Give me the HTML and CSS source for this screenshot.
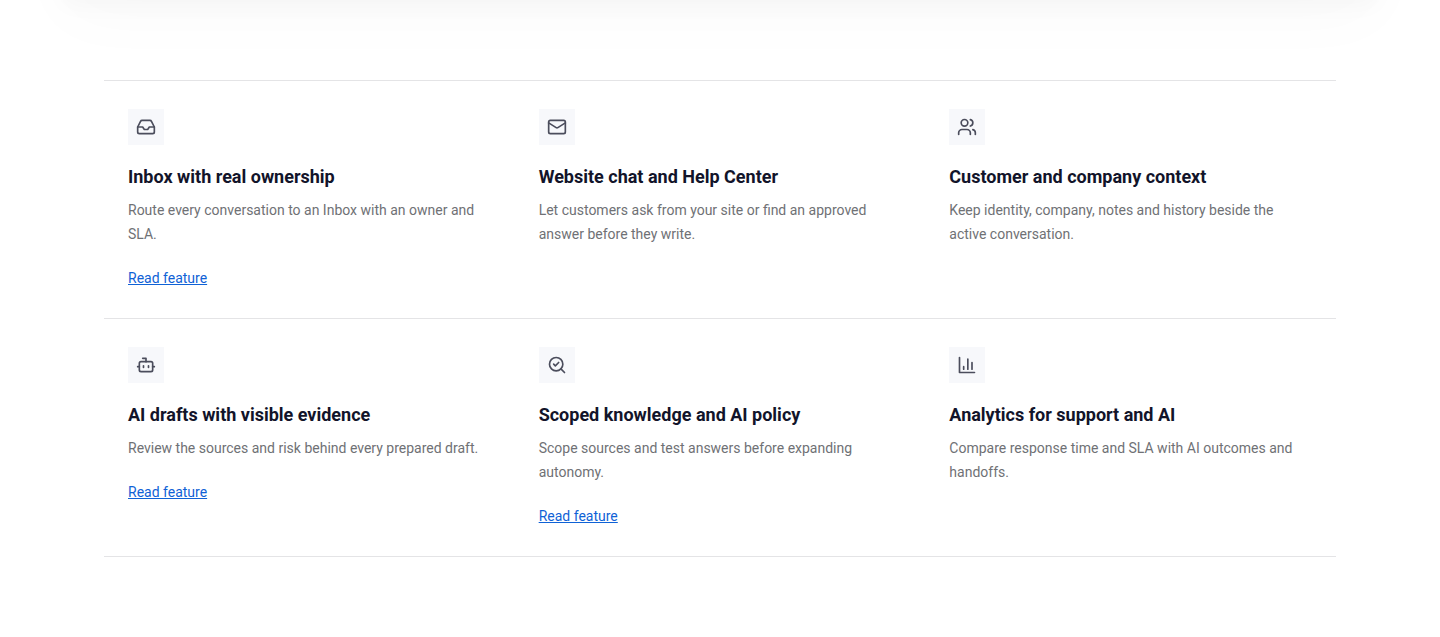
FILE: index.html
```html
<!DOCTYPE html>
<html lang="en">
<head>
  <meta charset="UTF-8">
  <title>Features</title>
  <meta name="viewport" content="width=device-width, initial-scale=1.0">
  <link rel="stylesheet" href="styles.css">
</head>

<body>

  <div class="preview"></div>

  <main class="features">
    <article class="feature">
      <div class="icon">
        <svg viewBox="0 0 24 24" aria-hidden="true">
          <path d="M22 12h-6l-2 3h-4l-2-3H2"/>
          <path d="M5.45 5.11 2 12v6a2 2 0 0 0 2 2h16a2 2 0 0 0 2-2v-6l-3.45-6.89A2 2 0 0 0 16.76 4H7.24a2 2 0 0 0-1.79 1.11z"/>
        </svg>
      </div>
      <h3>Inbox with real ownership</h3>
      <p>Route every conversation to an Inbox with an owner and SLA.</p>
      <a href="#">Read feature</a>
    </article>

    <article class="feature">
      <div class="icon">
        <svg viewBox="0 0 24 24" aria-hidden="true">
          <rect x="2" y="4" width="20" height="16" rx="2"/>
          <path d="m22 7-8.97 5.7a1.94 1.94 0 0 1-2.06 0L2 7"/>
        </svg>
      </div>
      <h3>Website chat and Help Center</h3>
      <p>Let customers ask from your site or find an approved answer before they write.</p>
    </article>

    <article class="feature">
      <div class="icon">
        <svg viewBox="0 0 24 24" aria-hidden="true">
          <circle cx="9" cy="7" r="4"/>
          <path d="M16 21v-2a4 4 0 0 0-4-4H6a4 4 0 0 0-4 4v2"/>
          <path d="M22 21v-2a4 4 0 0 0-3-3.87"/>
          <path d="M16 3.13a4 4 0 0 1 0 7.75"/>
        </svg>
      </div>
      <h3>Customer and company context</h3>
      <p>Keep identity, company, notes and history beside the active conversation.</p>
    </article>

    <article class="feature">
      <div class="icon">
        <svg viewBox="0 0 24 24" aria-hidden="true">
          <path d="M12 8V4H8"/>
          <rect x="4" y="8" width="16" height="12" rx="2"/>
          <path d="M2 14h2M20 14h2M15 13v2M9 13v2"/>
        </svg>
      </div>
      <h3>AI drafts with visible evidence</h3>
      <p>Review the sources and risk behind every prepared draft.</p>
      <a href="#">Read feature</a>
    </article>

    <article class="feature">
      <div class="icon">
        <svg viewBox="0 0 24 24" aria-hidden="true">
          <path d="m8 11 2 2 4-4"/>
          <circle cx="11" cy="11" r="8"/>
          <path d="m21 21-4.3-4.3"/>
        </svg>
      </div>
      <h3>Scoped knowledge and AI policy</h3>
      <p>Scope sources and test answers before expanding autonomy.</p>
      <a href="#">Read feature</a>
    </article>

    <article class="feature">
      <div class="icon">
        <svg viewBox="0 0 24 24" aria-hidden="true">
          <path d="M3 3v18h18"/>
          <path d="M18 17V9M13 17V5M8 17v-3"/>
        </svg>
      </div>
      <h3>Analytics for support and AI</h3>
      <p>Compare response time and SLA with AI outcomes and handoffs.</p>
    </article>
  </main>

</body>
</html>
```

FILE: styles.css
```css
:root {
  --text-color: #12142a;
  --muted-color: #6f7175;
  --link-color: #0f62d6;
  --line-color: #e4e4e6;
  --icon-bg: #f7f8fb;
}

* {
  box-sizing: border-box;
}

body {
  margin: 0;
  font-family: Roboto, Arial, sans-serif;
  font-size: 14px;
  line-height: 24px;
  background-color: #fff;
  color: var(--text-color);
  overflow-x: hidden;
}

/* Only the shadow of the panel reaches into the page */
.preview {
  height: 200px;
  margin: -200px 64px 80px;
  box-shadow: 0 4px 24px rgba(0, 0, 0, 0.03), 0 16px 64px rgba(0, 0, 0, 0.025);
}

.features {
  display: grid;
  grid-template-columns: repeat(3, 1fr);
  max-width: 1232px;
  margin: 0 auto 80px;
  border-top: 1px solid var(--line-color);
}

.feature {
  padding: 28px 24px;
  border-bottom: 1px solid var(--line-color);
}

.icon {
  display: flex;
  align-items: center;
  justify-content: center;
  width: 36px;
  height: 36px;
  margin-bottom: 20px;
  background: var(--icon-bg);
}

.icon svg {
  width: 20px;
  height: 20px;
  fill: none;
  stroke: #4b4d5c;
  stroke-width: 2;
  stroke-linecap: round;
  stroke-linejoin: round;
}

h3 {
  margin: 0 0 9px;
  font-size: 18px;
  line-height: 24px;
  font-weight: 700;
}

p {
  margin: 0;
  color: var(--muted-color);
}

.feature a {
  display: inline-block;
  margin-top: 20px;
  color: var(--link-color);
  text-decoration: underline;
}

@media (max-width: 800px) {
  .features {
    grid-template-columns: 1fr;
  }
}
```
